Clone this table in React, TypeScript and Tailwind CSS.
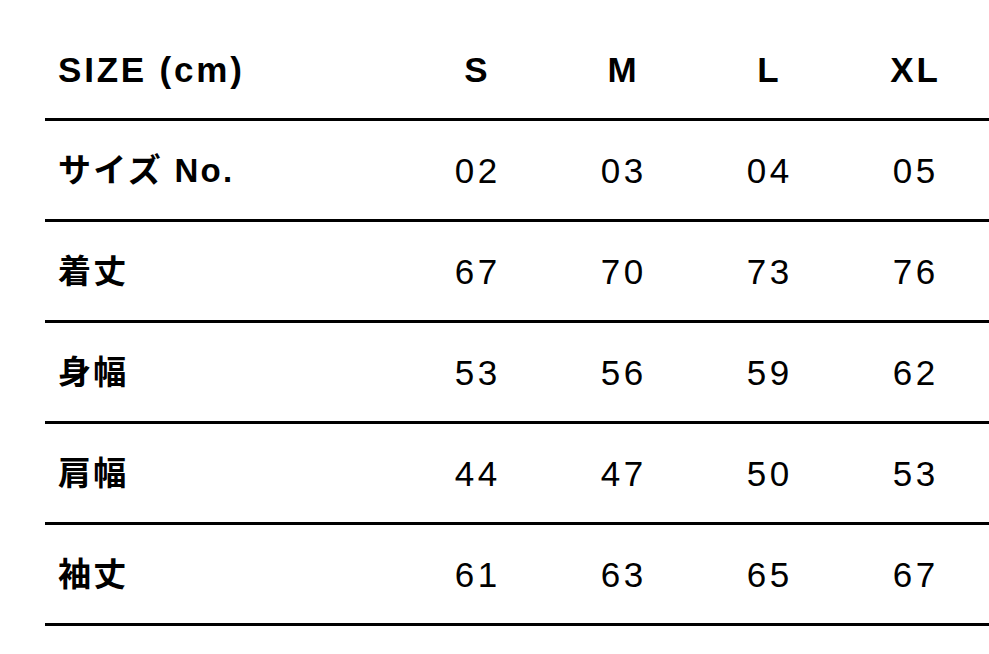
import React from 'react';

const sizes = ['S', 'M', 'L', 'XL'];

const rows: { label: string; values: string[] }[] = [
  { label: 'サイズ No.', values: ['02', '03', '04', '05'] },
  { label: '着丈', values: ['67', '70', '73', '76'] },
  { label: '身幅', values: ['53', '56', '59', '62'] },
  { label: '肩幅', values: ['44', '47', '50', '53'] },
  { label: '袖丈', values: ['61', '63', '65', '67'] },
];

const font = { fontFamily: '"Liberation Sans", "Noto Sans CJK JP", sans-serif' };

export default function App() {
  return (
    <div className="w-[989px] h-[654px] bg-white overflow-hidden text-black" style={font}>
      <div className="ml-[45px] mt-[20px] w-[944px]">
        {/* header */}
        <div className="grid grid-cols-[358px_repeat(4,146px)] h-[101px] border-b-[3px] border-black items-center">
          <div className="pl-[13px] text-[35px] font-bold tracking-[0.08em] leading-none">SIZE (cm)</div>
          {sizes.map(s => (
            <div key={s} className="text-center pl-[0.08em] text-[35px] font-bold tracking-[0.08em] leading-none">
              {s}
            </div>
          ))}
        </div>

        {rows.map(row => (
          <div
            key={row.label}
            className="grid grid-cols-[358px_repeat(4,146px)] h-[101px] border-b-[3px] border-black items-center"
          >
            <div className="pl-[13px] text-[33px] font-bold tracking-[0.07em] leading-none">{row.label}</div>
            {row.values.map((v, i) => (
              <div key={i} className="text-center pl-[0.1em] text-[35px] tracking-[0.1em] leading-none">
                {v}
              </div>
            ))}
          </div>
        ))}
      </div>
    </div>
  );
}
